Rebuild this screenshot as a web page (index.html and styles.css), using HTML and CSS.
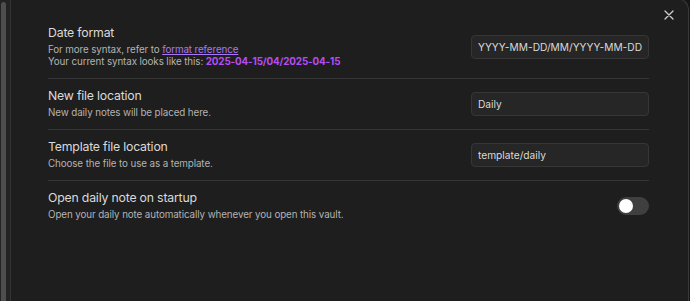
FILE: index.html
```html
<!DOCTYPE html>
<html lang="en">
  <head>
    <meta charset="UTF-8" />
    <meta name="viewport" content="width=device-width, initial-scale=1.0" />
    <title>Daily notes</title>
    <link rel="stylesheet" href="styles.css">
  </head>
  <body>
    <div class="sidebar">
      <div class="scroll-thumb"></div>
    </div>

    <div class="modal">
      <div class="close-btn">
        <svg width="10" height="10" viewBox="0 0 10 10">
          <path d="M1 1 L9 9 M9 1 L1 9" stroke="#cfcfcf" stroke-width="1.3" stroke-linecap="round" />
        </svg>
      </div>

      <div class="settings">
        <!-- Date format -->
        <div class="setting-item">
          <div class="setting-info">
            <div class="setting-name">Date format</div>
            <div class="setting-desc">
              For more syntax, refer to <a href="#">format reference</a><br />
              Your current syntax looks like this: <span class="sample">2025-04-15/04/2025-04-15</span>
            </div>
          </div>
          <input type="text" value="YYYY-MM-DD/MM/YYYY-MM-DD" />
        </div>

        <div class="setting-item">
          <div class="setting-info">
            <div class="setting-name">New file location</div>
            <div class="setting-desc">New daily notes will be placed here.</div>
          </div>
          <input type="text" value="Daily" />
        </div>

        <div class="setting-item">
          <div class="setting-info">
            <div class="setting-name">Template file location</div>
            <div class="setting-desc">Choose the file to use as a template.</div>
          </div>
          <input type="text" value="template/daily" />
        </div>

        <div class="setting-item">
          <div class="setting-info">
            <div class="setting-name">Open daily note on startup</div>
            <div class="setting-desc">Open your daily note automatically whenever you open this vault.</div>
          </div>
          <div class="toggle"><div class="knob"></div></div>
        </div>
      </div>
    </div>
  </body>
</html>
```

FILE: styles.css
```css
body {
  font-family: Inter, "Noto Sans", sans-serif;
  background-color: #161616;
  color: #dadada;
  display: flex;
  height: 100vh;
  margin: 0;
  overflow: hidden;
}
.sidebar {
  width: 9px;
  background: #232323;
  border-right: 1px solid #333;
  padding-left: 1px;
  flex-shrink: 0;
}
.scroll-thumb {
  width: 5px;
  height: 100%;
  margin-top: 2px;
  background: #4e4e4e;
  border-radius: 3px 3px 0 0;
}
.modal {
  position: relative;
  flex: 1;
  background: #1e1e1e;
  margin-top: -2px;
  margin-right: 1px;
  border-top: 1px solid #3a3a3a;
  border-right: 1px solid #3a3a3a;
  border-top-right-radius: 12px;
}
.close-btn {
  position: absolute;
  top: 11px;
  right: 14px;
  width: 10px;
  height: 10px;
  display: flex;
}
.settings {
  padding: 17px 39px 0 37px;
}
.setting-item {
  display: flex;
  align-items: center;
  justify-content: space-between;
  padding: 9px 0 10px;
  border-top: 1px solid #363636;
}
.setting-item:first-child {
  border-top: none;
}
.setting-name {
  font-size: 12.3px;
  letter-spacing: -0.2px;
  line-height: 16px;
  color: #dadada;
}
.setting-desc {
  font-size: 9.8px;
  letter-spacing: -0.1px;
  line-height: 12px;
  margin-top: 3px;
  color: #b3b3b3;
}
.setting-desc a {
  color: #a877f4;
}
.sample {
  color: #b84cf2;
  font-weight: bold;
}
input {
  width: 178px;
  height: 24px;
  box-sizing: border-box;
  padding: 0 6px;
  background: #262626;
  border: 1px solid #363636;
  border-radius: 4px;
  color: #dadada;
  font-family: Inter, "Noto Sans", sans-serif;
  font-size: 10.2px;
  outline: none;
}
.toggle {
  width: 32px;
  height: 18px;
  border-radius: 9px;
  background: #3f3f3f;
  display: flex;
  align-items: center;
  padding: 0 2px;
  box-sizing: border-box;
}
.knob {
  width: 14px;
  height: 14px;
  border-radius: 50%;
  background: #fff;
}
```
